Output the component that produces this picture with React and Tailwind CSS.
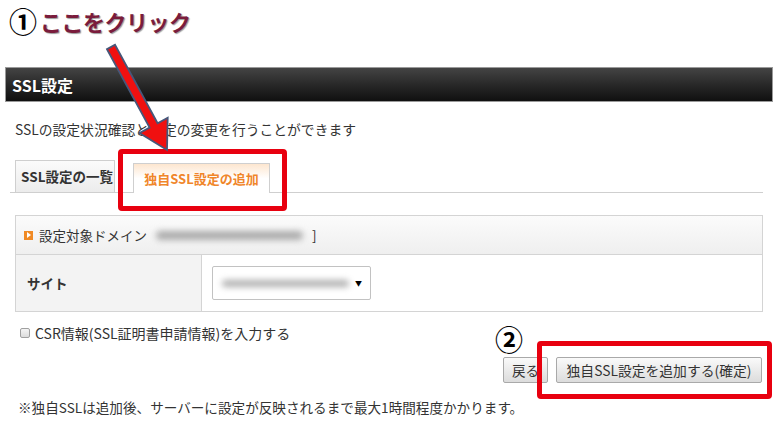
import React from 'react';

const jp = { fontFamily: '"Noto Sans CJK JP", "Noto Sans", sans-serif' };

const Arrow = () => (
  <svg className="absolute left-0 top-0 pointer-events-none" width="780" height="423">
    <polygon
      points="107,49.2 149.6,127.6 139.5,133 167,150 167.7,117.8 157.6,123.2 115,44.8"
      fill="#f01010"
      stroke="#46577a"
      strokeWidth="1.8"
      strokeLinejoin="miter"
    />
  </svg>
);

const App = () => {
  return (
    <div className="relative w-[780px] h-[423px] overflow-hidden bg-white text-[#333]" style={jp}>
      {/* step 1 label */}
      <div className="h-[67px] flex items-start pl-[9px] pt-[5px]">
        <span className="text-[28px] font-bold leading-[32px] text-black">①</span>
        <span className="ml-[3px] text-[22px] font-bold leading-[32px] tracking-[-0.5px] text-[#7a1c3c] [text-shadow:1px_1px_1px_#9a9a9a]">
          ここをクリック
        </span>
      </div>

      {/* title bar */}
      <div className="mx-[5px] w-[768px] h-[35px] flex items-center border border-[#9a9a9a] bg-gradient-to-b from-[#444] to-[#101010] pl-[6px]">
        <span className="text-[16px] font-bold text-white">SSL設定</span>
      </div>

      <p className="mt-[17px] pl-[15px] text-[13.8px] leading-[20px]">
        SSLの設定状況確認と設定の変更を行うことができます
      </p>

      {/* tabs */}
      <div className="mt-[21px] ml-[10px] mr-[17px] h-[33px] flex items-end border-b border-[#cfcfcf]">
        <div className="ml-[5px] w-[100px] h-[32px] flex items-center justify-center pl-[4px] border border-b-0 border-[#cfcfcf] bg-gradient-to-b from-[#fbfbfb] to-[#ececec] text-[13.5px] font-bold text-[#333]">
          SSL設定の一覧
        </div>
        <div className="ml-[18px] w-[137px] h-[30px] -mb-px flex items-center justify-center border border-b-0 border-[#cfcfcf] bg-gradient-to-b from-[#fde6cf] via-white to-white text-[13px] font-bold text-[#f0862a]">
          独自SSL設定の追加
        </div>
      </div>

      {/* settings table */}
      <div className="mt-[22px] ml-[15px] w-[748px] border border-[#d4d4d4]">
        <div className="h-[39px] flex items-center border-b border-[#d4d4d4] bg-gradient-to-b from-[#fbfbfb] to-[#efefef] pl-[8px]">
          <span className="w-[9px] h-[9px] bg-[#f08a24] flex items-center justify-center">
            <span className="w-0 h-0 border-y-[3px] border-y-transparent border-l-[4px] border-l-white ml-[1px]" />
          </span>
          <span className="ml-[6px] text-[13.5px]">設定対象ドメイン</span>
          <span className="ml-[9px] w-[147px] h-[9px] rounded-full bg-[#ababab] blur-[3px]" />
          <span className="ml-[9px] text-[13.5px]">]</span>
        </div>
        <div className="h-[56px] flex">
          <div className="w-[186px] flex items-center bg-[#f3f3f3] border-r border-[#d4d4d4] pl-[11px] text-[13.5px] font-bold">
            サイト
          </div>
          <div className="flex items-center pl-[10px]">
            <div className="w-[159px] h-[34px] flex items-center border border-[#c2c2c2] rounded-[2px] bg-white pl-[9px] pr-[8px]">
              <span className="w-[127px] h-[7px] rounded-full bg-[#b0b0b0] blur-[3px]" />
              <span className="ml-auto text-[7px] text-black">▼</span>
            </div>
          </div>
        </div>
      </div>

      {/* csr checkbox */}
      <div className="mt-[11px] ml-[20px] h-[20px] flex items-center">
        <span className="w-[10px] h-[10px] rounded-[2px] border border-[#a0a0a0] bg-gradient-to-b from-[#f4f4f4] to-[#dcdcdc]" />
        <span className="ml-[5px] text-[14px]">CSR情報(SSL証明書申請情報)を入力する</span>
      </div>

      {/* buttons */}
      <div className="mt-[14px] mr-[18px] flex justify-end gap-[8px]">
        <button className="w-[45px] h-[26px] border border-[#a9a9a9] rounded-[2px] bg-gradient-to-b from-[#fafafa] to-[#dcdcdc] text-[13.5px] text-[#333]">
          戻る
        </button>
        <button className="w-[206px] h-[26px] border border-[#a9a9a9] rounded-[2px] bg-gradient-to-b from-[#fafafa] to-[#dcdcdc] text-[13.8px] text-[#333]">
          独自SSL設定を追加する(確定)
        </button>
      </div>

      <p className="mt-[14px] ml-[18px] text-[13.6px] leading-[20px]">
        ※独自SSLは追加後、サーバーに設定が反映されるまで最大1時間程度かかります。
      </p>

      {/* annotations */}
      <div className="absolute left-[118px] top-[149px] w-[169px] h-[62px] border-[5px] border-[#e8000f] rounded-[4px]" />
      <div className="absolute left-[537px] top-[341px] w-[235px] h-[58px] border-[5px] border-[#e8000f] rounded-[4px]" />
      <span className="absolute left-[495px] top-[324px] text-[28px] font-bold leading-[30px] text-black">②</span>
      <Arrow />
    </div>
  );
};

export default App;
